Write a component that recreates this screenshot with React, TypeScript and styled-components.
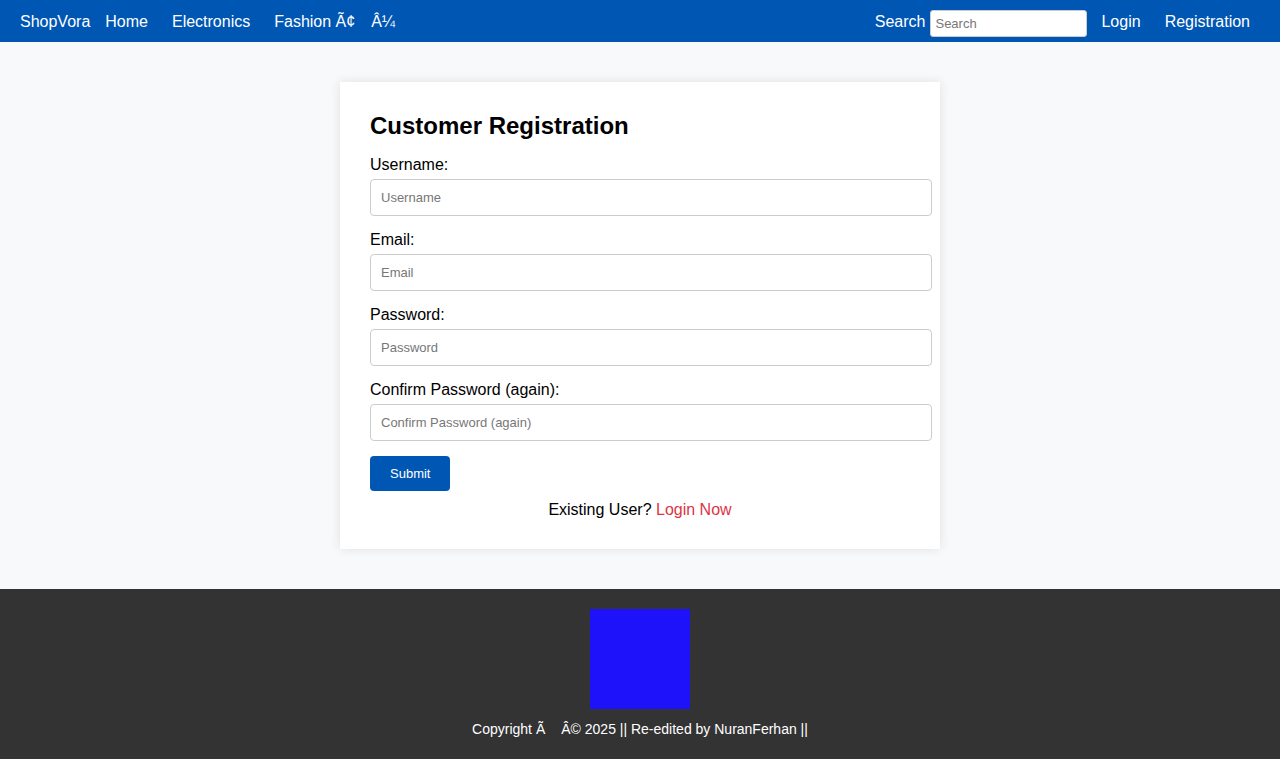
import React from 'react';
import styled, { createGlobalStyle } from 'styled-components';

const GlobalStyle = createGlobalStyle`
  * { box-sizing: content-box; }
  body {
    margin: 0;
    font-family: "Liberation Sans", Arial, sans-serif;
    background: #f8f9fa;
    color: #000;
  }
`;

const NavBar = styled.nav`
  display: flex;
  align-items: center;
  justify-content: space-between;
  height: 40px;
  padding: 2px 18px 0 20px;
  background: #0056b3;
  color: #fff;
  font-size: 16px;
`;

const NavGroup = styled.div`
  display: flex;
  align-items: center;
`;

const Brand = styled.a`
  color: #fff;
  text-decoration: none;
  margin-right: 3px;
`;

const NavLink = styled.a`
  color: #fff;
  text-decoration: none;
  padding: 0 12px;
`;

const Caret = styled.span`
  margin-left: 16px;
`;

const SearchLabel = styled.label`
  margin-right: 5px;
`;

const SearchInput = styled.input`
  width: 147px;
  height: 19px;
  padding: 3px 4px;
  border: 1px solid #ccc;
  border-radius: 3px;
  font-family: inherit;
  font-size: 13px;
  margin: 2px 2px 0 0;
  &::placeholder { color: #777; }
`;

const Main = styled.main`
  display: flex;
  justify-content: center;
  padding: 40px 0;
`;

const Card = styled.div`
  width: 540px;
  padding: 30px;
  background: #fff;
  box-shadow: 0 0 10px rgba(0, 0, 0, 0.1);
`;

const Title = styled.h2`
  margin: 0 0 16px;
  font-size: 24px;
  font-weight: bold;
`;

const Group = styled.div`
  margin-bottom: 15px;
`;

const Label = styled.label`
  display: block;
  margin-bottom: 5px;
  font-size: 16px;
`;

const Input = styled.input`
  display: block;
  width: 100%;
  padding: 10px;
  border: 1px solid #ccc;
  border-radius: 4px;
  font-family: inherit;
  font-size: 13px;
  line-height: 15px;
  &::placeholder { color: #777; }
`;

const SubmitButton = styled.button`
  display: block;
  padding: 10px 20px;
  border: none;
  border-radius: 4px;
  background: #0056b3;
  color: #fff;
  font-family: inherit;
  font-size: 13px;
  line-height: 15px;
`;

const Existing = styled.p`
  margin: 10px 0 0;
  text-align: center;
  font-size: 16px;
`;

const LoginLink = styled.a`
  color: #dc3545;
  text-decoration: none;
`;

const Footer = styled.footer`
  background: #333;
  color: #fff;
  padding: 20px;
  text-align: center;
`;

const Logo = styled.div`
  width: 100px;
  height: 100px;
  margin: 0 auto 10px;
  background: #1d12fa;
`;

const Copy = styled.p`
  margin: 0;
  font-size: 14px;
  line-height: 20px;
`;

const Gap = styled.span`
  margin-left: 16px;
`;

const fields = [
  { label: 'Username:', placeholder: 'Username', type: 'text' },
  { label: 'Email:', placeholder: 'Email', type: 'email' },
  { label: 'Password:', placeholder: 'Password', type: 'password' },
  { label: 'Confirm Password (again):', placeholder: 'Confirm Password (again)', type: 'password' },
];

export default function App() {
  return (
    <>
      <GlobalStyle />
      <NavBar>
        <NavGroup>
          <Brand href="#">ShopVora</Brand>
          <NavLink href="#">Home</NavLink>
          <NavLink href="#">Electronics</NavLink>
          <NavLink href="#">
            Fashion Ã¢
            <Caret>Â¼</Caret>
          </NavLink>
        </NavGroup>
        <NavGroup>
          <SearchLabel>Search</SearchLabel>
          <SearchInput placeholder="Search" />
          <NavLink href="#">Login</NavLink>
          <NavLink href="#">Registration</NavLink>
        </NavGroup>
      </NavBar>
      <Main>
        <Card>
          <Title>Customer Registration</Title>
          <form onSubmit={(e) => e.preventDefault()}>
            {fields.map((f) => (
              <Group key={f.placeholder}>
                <Label>{f.label}</Label>
                <Input type={f.type} placeholder={f.placeholder} />
              </Group>
            ))}
            <SubmitButton type="submit">Submit</SubmitButton>
          </form>
          <Existing>
            Existing User?
            {' '}
            <LoginLink href="#">Login Now</LoginLink>
          </Existing>
        </Card>
      </Main>
      <Footer>
        <Logo />
        <Copy>
          Copyright Ã
          <Gap>Â© 2025 || Re-edited by NuranFerhan ||</Gap>
        </Copy>
      </Footer>
    </>
  );
}
